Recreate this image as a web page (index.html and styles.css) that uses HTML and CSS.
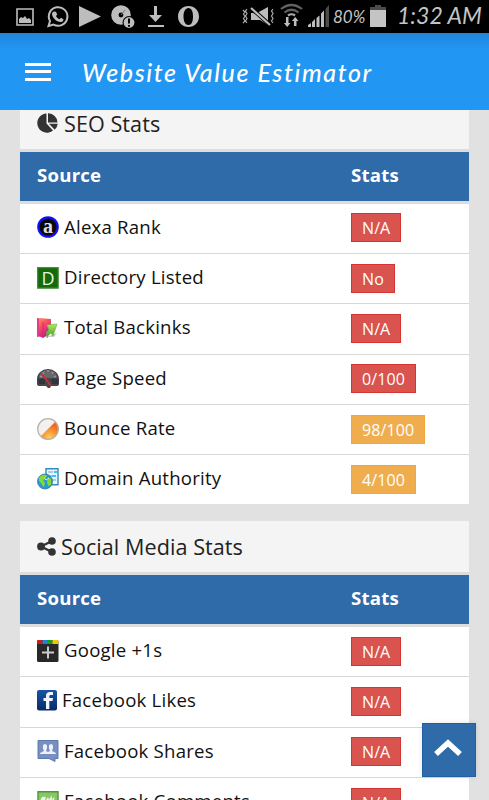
FILE: index.html
```html
<!DOCTYPE html>
<html lang="en">
<head>
<meta charset="utf-8">
<title>Website Value Estimator</title>
<link rel="stylesheet" href="styles.css">
</head>
<body>
<div class="phone">
  <div class="status">
    <svg class="status-left" width="200" height="33" viewBox="0 0 200 33" fill="#bdbdbd">
      <path d="M17 9h16v16H17z" fill="none" stroke="#bdbdbd" stroke-width="1.6"/>
      <path d="M19 23v-4l2-2 2 1 2-2 2 3 2-1 2 2v3z"/>
      <path d="M48.500 26l1.500-5a9.300 9.300 0 1 1 3.600 3.600z" fill="none" stroke="#bdbdbd" stroke-width="2"/>
      <path d="M54 11.500l2 .2 1.200 2.800-1.200 1.500c1 1.800 2 2.500 3.500 3.200l1.500-1.500 2.500 1.500c0 2-1.500 2.800-3 2.800-4 0-8.500-4.500-8.500-8 0-1.200.8-2.200 2-2.500z"/>
      <path d="M79 6l22 10.500L79 27z"/>
      <circle cx="121" cy="15" r="9.800"/><circle cx="121" cy="15" r="2.400" fill="#000"/>
      <path d="M121 15l4-5" stroke="#777" stroke-width="1"/>
      <circle cx="129" cy="22.500" r="6.500" fill="#000"/><circle cx="129" cy="22.500" r="5.400"/>
      <path d="M129 18.500v5M129 25v1.800" stroke="#000" stroke-width="2"/>
      <path d="M154 6h3v9h5l-6.500 7-6.500-7h5zM148 25h16v2h-16z"/>
      <path fill-rule="evenodd" d="M188.500 6c-6 0-10.500 4.500-10.500 10.500S182.500 27 188.500 27 199 22.500 199 16.500 194.500 6 188.500 6zm0 2c3 0 4.500 3.500 4.500 8.500s-1.500 8.500-4.500 8.500-5-3.500-5-8.500 2-8.500 5-8.500z"/>
    </svg>
    <svg class="status-mid" width="88" height="33" viewBox="242 0 88 33" fill="#bdbdbd">
      <path d="M243 10l2 2-1.500 2 1.500 2.500-1.500 2 1.500 2.500-2 2M247 9l-1.500 2 1.500 2.500-1.500 2.500 1.500 2.500-1.500 2.500 1.500 2M273 9l-1.500 2 1.500 2.500-1.500 2.500 1.500 2.500-1.500 2.500 1.500 2" fill="none" stroke="#aaa" stroke-width="1.200"/>
      <path d="M251 13h6l11-6v18l-8-5h-9z"/>
      <path d="M251 8l19 17" stroke="#000" stroke-width="4"/><path d="M251 8l19 17" stroke="#bdbdbd" stroke-width="2.200"/>
      <g fill="none" stroke="#626262" stroke-width="2.200"><path d="M281 9q10.500-8 21 0M284.500 12.500q7-5.500 14 0"/><path d="M288 15.500q3.500-2.500 7 0" stroke="#aaa"/></g>
      <path d="M286 17h2.500v6h2l-3.300 4-3.300-4h2zM294 26h2.500v-5h2l-3.300-4-3.300 4h2z"/>
      <path d="M308 27v-2l3-2v4zM312 27v-5l3-3v8zM316.500 27v-9l3-2.500V27zM321 27V13.500l3-3V27z"/>
      <path d="M325.500 27V9l3.500-4v22z" fill="#4b4b4b"/>
    </svg>
    <span class="percent">80%</span>
    <svg class="battery" width="16" height="23" viewBox="0 0 16 23"><path d="M5 0h6v2h5v4H0V2h5z" fill="#4c4c4c"/><path d="M0 5h16v17H0z" fill="#c4c4c4"/></svg>
    <span class="clock">1:32 AM</span>
  </div>
  <header class="appbar">
    <div class="menu"><i></i><i></i><i></i></div>
    <h1>Website Value Estimator</h1>
  </header>
  <main>
    <section class="panel">
      <h2><svg width="21" height="21" viewBox="0 0 21 21" fill="#333"><path d="M9.500 .5v10l6.500 7A9.600 9.600 0 1 1 9.500 .5z"/><path d="M11 .3a9.200 9.200 0 0 1 9.500 9.200H11z"/><path d="M12 10.800h8.700a9 9 0 0 1-3 6z"/></svg><span>SEO Stats</span></h2>
      <div class="row head"><b>Source</b><b>Stats</b></div>
      <div class="row"><div class="source"><svg width="22" height="22" viewBox="0 0 22 22"><circle cx="11" cy="11" r="9.700" fill="#090909" stroke="#1010f0" stroke-width="2.200"/><text class="alexa" x="11" y="16.500" text-anchor="middle">a</text></svg><span>Alexa Rank</span></div><div><em class="badge">N/A</em></div></div>
      <div class="row"><div class="source"><svg width="22" height="22" viewBox="0 0 22 22"><path d="M.6.600h20.600v20.600H.6z" fill="#126b08" stroke="#478d3e" stroke-width="1.200"/><text class="letter" x="11" y="17.500" text-anchor="middle">D</text></svg><span>Directory Listed</span></div><div><em class="badge">No</em></div></div>
      <div class="row"><div class="source"><svg width="22" height="22" viewBox="0 0 22 22"><defs><linearGradient id="folder" x1="0" y1="0" x2=".5" y2="1"><stop offset="0" stop-color="#ff9257"/><stop offset=".45" stop-color="#f34a66"/><stop offset="1" stop-color="#ba1798"/></linearGradient><linearGradient id="leaf" x2="0" y2="1"><stop stop-color="#b4e766"/><stop offset="1" stop-color="#349b25"/></linearGradient></defs><path d="M9 20l11-4-3 4z" fill="#ccc"/><path d="M0 1l6 1v17l-6 1z" fill="#e63a86"/><path d="M2 1l12 1v14l-8 5-4-2z" fill="url(#folder)"/><path d="M6 5v14" stroke="#d62b69"/><path d="M10 8l10-1-4 12-2-3c-2 1-3 3-4 5-1-4-1-6 2-8z" fill="url(#leaf)" stroke="#79ba45" stroke-width=".7"/></svg><span>Total Backinks</span></div><div><em class="badge">N/A</em></div></div>
      <div class="row"><div class="source"><svg width="22" height="22" viewBox="0 0 22 22"><path d="M0 17v-5a11 10 0 0 1 22 0v5q0 2-3 2h-5l-1 2h-2l-2-2H3q-3 0-3-2z" fill="#45454a"/><path d="M2 11a9 8 0 0 1 18 0z" fill="#66666b"/><path d="M3 9l2 1M6 5l1 2M11 3v2M16 5l-1 2M19 9l-2 1" stroke="#aaa"/><path d="M1 12h7v5H2zM14 12h7v5h-6z" fill="#303442"/><path d="M5 7l9 12" stroke="#ca3030" stroke-width="1.700"/></svg><span>Page Speed</span></div><div><em class="badge">0/100</em></div></div>
      <div class="row"><div class="source"><svg width="22" height="22" viewBox="0 0 22 22"><defs><radialGradient id="orange" cx=".5" cy=".9" r=".7"><stop stop-color="#ffd05a"/><stop offset="1" stop-color="#ef6a20"/></radialGradient></defs><circle cx="11" cy="11" r="10.300" fill="#f1f1f1"/><path d="M18.500 3.500A10.300 10.300 0 0 1 3.500 18.500z" fill="url(#orange)"/><circle cx="11" cy="11" r="10.300" fill="none" stroke="#bab0a5" stroke-width="1.200"/></svg><span>Bounce Rate</span></div><div><em class="badge warn">98/100</em></div></div>
      <div class="row"><div class="source"><svg width="22" height="22" viewBox="0 0 22 22"><path d="M9 .7h12v16H9z" fill="#e8f7ff" stroke="#3989b7" stroke-width="1.400"/><path d="M11 4h5M12 8h7M14 12h5" stroke="#6ca0c1" stroke-width="1.200"/><path d="M17 3h3v2h-3zM15 7h4v2h-4z" fill="#35c8ed"/><circle cx="8" cy="13.500" r="7.500" fill="#2699d1" stroke="#3377a1" stroke-width=".8"/><path d="M2 10c2-4 7-4 8-2l-2 3-2 1 2 3-1 4c-3-2-2-4-5-6zM11 9l3 2v6l-3 1-1-4z" fill="#80da37"/><path d="M7 10l2 2 3-2" stroke="#ddf594" fill="none"/></svg><span>Domain Authority</span></div><div><em class="badge warn">4/100</em></div></div>
    </section>
    <section class="panel">
      <h2><svg class="share" width="19" height="19" viewBox="0 0 19 19" fill="#333"><path d="M15 4L4 9.500 15 15" fill="none" stroke="#333" stroke-width="2.300"/><circle cx="15" cy="4" r="3.800"/><circle cx="4" cy="9.500" r="3.900"/><circle cx="15" cy="15" r="3.800"/></svg><span>Social Media Stats</span></h2>
      <div class="row head"><b>Source</b><b>Stats</b></div>
      <div class="row"><div class="source"><svg width="22" height="22" viewBox="0 0 22 22"><rect width="21.500" height="22" rx="1.500" fill="#282828"/><path d="M1 0h4.500v4H0V1z" fill="#d51916"/><path d="M5.500 0H10v4H5.500z" fill="#2980d2"/><path d="M10 0h5.500v4H10z" fill="#12a322"/><path d="M15.500 0h5l1 1v3h-6z" fill="#f0c709"/><path d="M5 12.500h12M11 6.500v12" stroke="#ccc" stroke-width="2"/></svg><span>Google +1s</span></div><div><em class="badge">N/A</em></div></div>
      <div class="row"><div class="source"><svg class="fb" width="20" height="21" viewBox="0 0 20 21"><defs><linearGradient id="blue" x2="0" y2="1"><stop stop-color="#1756a5"/><stop offset="1" stop-color="#082b65"/></linearGradient></defs><rect width="20" height="20.500" rx="2" fill="url(#blue)"/><path d="M9 19v-8H6.500V8H9V6c0-3 1.500-4 4-4h3v3h-2c-1.500 0-1.700.5-1.700 1.500V8H16l-.5 3h-3.200v8z" fill="#f0f5ff"/></svg><span>Facebook Likes</span></div><div><em class="badge">N/A</em></div></div>
      <div class="row"><div class="source"><svg width="22" height="22" viewBox="0 0 22 22"><path d="M1 .5h20v18h-3v3l-6-3H1z" fill="#7890c1" stroke="#5d7ab1"/><path d="M3 14c0-2 3-2 4-3-2-4-1-7 1-7s3 3 1 7l2 1 2-1c-2-4-1-7 1-7s3 3 1 7c1 1 4 1 4 3z" fill="#eef1f8"/></svg><span>Facebook Shares</span></div><div><em class="badge">N/A</em></div></div>
      <div class="row"><div class="source"><svg width="22" height="22" viewBox="0 0 22 22"><path d="M1 .7h20v18h-3v3l-5-3H1z" fill="#8bc569" stroke="#499b32" stroke-width="1.400"/><path d="M3 11l3-5-1 5 3-5-1 5M9 11l2-4v5l3-5v5l3-5" stroke="#eff8ea" stroke-width="1.500" fill="none"/></svg><span>Facebook Comments</span></div><div><em class="badge">N/A</em></div></div>
    </section>
  </main>
  <a class="to-top"><svg width="28" height="18" viewBox="0 0 28 18"><path d="M2 15L14 4l12 11" fill="none" stroke="#fff" stroke-width="5.500"/></svg></a>
</div>
</body>
</html>
```
FILE: styles.css
```css
* { box-sizing: border-box; }
body { margin: 0; font-family: "Open Sans", sans-serif; color: #111; }
.phone { position: relative; display: flex; flex-direction: column; width: 489px; height: 800px; overflow: hidden; background: #e1e1e1; }
.status { display: flex; flex: none; height: 33px; background: #000; color: #c4c4c4; font-family: Lato, sans-serif; font-style: italic; white-space: nowrap; }
.status svg { flex: none; }
.status-mid { margin-left: 42px; }
.percent { width: 36px; margin-left: 3px; font-size: 17px; line-height: 33px; }
.battery { margin: 5px 0 0 1px; }
.clock { margin-left: 11px; font-size: 23px; line-height: 31px; }
.appbar { display: flex; flex: none; align-items: center; height: 77px; padding: 0 25px; color: #fff; background: linear-gradient(#2185db, #2196f3 16px); }
.menu { display: flex; flex-direction: column; gap: 4.500px; width: 26px; margin-right: 31px; }
.menu i { height: 3px; background: #fff; }
h1 { margin: 0; font: italic 500 25px Lato, sans-serif; letter-spacing: 1.600px; white-space: nowrap; }
main { flex: 1; min-height: 0; padding: 0 20px; overflow: hidden; }
.panel { margin-bottom: 16.500px; background: #fff; }
.panel:first-child { margin-top: -12.300px; }
h2 { display: flex; align-items: center; gap: 6px; height: 54px; margin: 0; padding: 0 17px; background: #f4f4f4; border-bottom: 3px solid #ddd; font-size: 21.600px; font-weight: 400; letter-spacing: .05px; color: #222; }
.row { display: grid; grid-template-columns: 314px 1fr; align-items: center; height: 50.300px; padding: 0 17px; border-top: 1px solid #d8d8d8; font-size: 18.600px; letter-spacing: .22px; }
.head { height: 52px; background: #2f6aa9; border-top: 0; border-bottom: 3px solid #ddd; color: #fff; }
.head b { padding-bottom: 3px; font-weight: 700; }
.head + .row { border-top: 0; height: 49.300px; }
.source { display: flex; align-items: center; gap: 5px; padding-bottom: 2px; white-space: nowrap; }
.source span { padding-bottom: 2px; }
.source svg, h2 svg { flex: none; }
.share { margin-right: -1px; }
.badge { display: block; width: max-content; height: 29px; margin-top: -1px; padding: 0 10px; border: 1px solid #d63431; background: #d9534f; color: #fff; font-size: 16px; font-style: normal; line-height: 28px; letter-spacing: .1px; }
.warn { background: #f0ad4e; border-color: #efa83c; }
.alexa { font: bold 20px "Liberation Serif", serif; fill: #ddd; letter-spacing: 0; }
.letter { font: 400 18px "Open Sans", sans-serif; fill: #e8f3e5; letter-spacing: 0; }
.to-top { position: absolute; left: 422px; top: 723px; display: flex; align-items: center; justify-content: center; width: 54px; height: 54px; background: #2f6aa9; border: 1px solid #1e5fa5; box-shadow: 0 0 5px rgba(0,0,0,.1); }
.to-top svg { margin: 0 2px 4px 0; }
```
